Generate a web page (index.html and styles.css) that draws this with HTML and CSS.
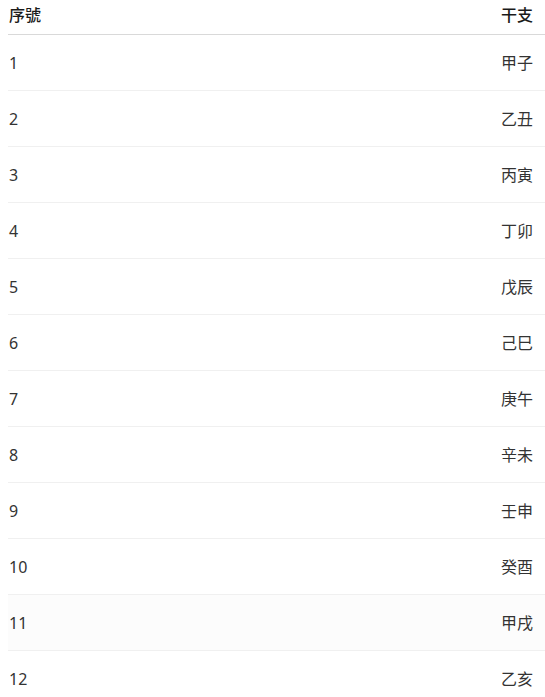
FILE: index.html
```html
<!DOCTYPE html>
<html lang="zh-Hant">
<head>
<meta charset="utf-8">
<title>干支</title>
<link rel="stylesheet" href="styles.css">
</head>
<body>
<table class="gz-table">
  <thead>
    <tr><th class="col-no">序號</th><th class="col-gz">干支</th></tr>
  </thead>
  <tbody>
    <tr><td class="col-no">1</td><td class="col-gz">甲子</td></tr>
    <tr><td class="col-no">2</td><td class="col-gz">乙丑</td></tr>
    <tr><td class="col-no">3</td><td class="col-gz">丙寅</td></tr>
    <tr><td class="col-no">4</td><td class="col-gz">丁卯</td></tr>
    <tr><td class="col-no">5</td><td class="col-gz">戊辰</td></tr>
    <tr><td class="col-no">6</td><td class="col-gz">己巳</td></tr>
    <tr><td class="col-no">7</td><td class="col-gz">庚午</td></tr>
    <tr><td class="col-no">8</td><td class="col-gz">辛未</td></tr>
    <tr><td class="col-no">9</td><td class="col-gz">壬申</td></tr>
    <tr><td class="col-no">10</td><td class="col-gz">癸酉</td></tr>
    <tr class="is-hover"><td class="col-no">11</td><td class="col-gz">甲戌</td></tr>
    <tr><td class="col-no">12</td><td class="col-gz">乙亥</td></tr>
  </tbody>
</table>
</body>
</html>
```

FILE: styles.css
```css
html, body {
  margin: 0;
  padding: 0;
  background: #ffffff;
  overflow: hidden;
}
body {
  padding: 0 0 0 8px;
  font-family: "Noto Sans", "Noto Sans CJK TC", sans-serif;
  font-size: 16px;
  color: #333333;
}
.gz-table {
  width: 537px;
  border-collapse: collapse;
  border-spacing: 0;
}
.gz-table th {
  font-weight: 500;
  color: #1a1a1a;
  line-height: 24px;
  padding: 3px 12px 7px 1px;
  border-bottom: 1px solid #d9d9d9;
}
.gz-table td {
  height: 55px;
  line-height: 24px;
  padding: 0 12px 0 1px;
  border-bottom: 1px solid #f0f0f0;
  vertical-align: middle;
}
.gz-table .col-no { text-align: left; }
.gz-table .col-gz { text-align: right; }
.gz-table tr.is-hover td { background: #fcfcfc; }
```
